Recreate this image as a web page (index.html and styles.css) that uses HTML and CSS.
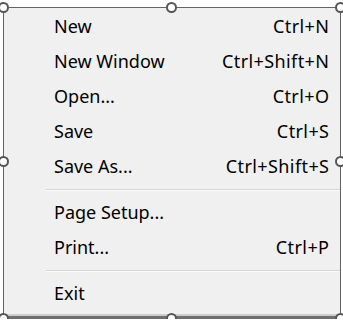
FILE: index.html
```html
<!DOCTYPE html>
<html lang="en">
<head>
    <meta charset="UTF-8">
    <meta name="viewport" content="width=device-width, initial-scale=1.0">
    <title>File Menu</title>
    <link rel="stylesheet" href="styles.css">
</head>
<body>
    <div class="frame">
        <ul class="menu">
            <li class="item"><span class="label">New</span><span class="shortcut">Ctrl+N</span></li>
            <li class="item"><span class="label">New Window</span><span class="shortcut">Ctrl+Shift+N</span></li>
            <li class="item"><span class="label">Open...</span><span class="shortcut">Ctrl+O</span></li>
            <li class="item"><span class="label">Save</span><span class="shortcut">Ctrl+S</span></li>
            <li class="item"><span class="label">Save As...</span><span class="shortcut">Ctrl+Shift+S</span></li>
            <li class="separator"></li>
            <li class="item"><span class="label">Page Setup...</span><span class="shortcut"></span></li>
            <li class="item"><span class="label">Print...</span><span class="shortcut">Ctrl+P</span></li>
            <li class="separator"></li>
            <li class="item"><span class="label">Exit</span><span class="shortcut"></span></li>
        </ul>

        <span class="handle top left"></span>
        <span class="handle top center"></span>
        <span class="handle top right"></span>
        <span class="handle middle left"></span>
        <span class="handle middle right"></span>
        <span class="handle bottom left"></span>
        <span class="handle bottom center"></span>
        <span class="handle bottom right"></span>
    </div>
</body>
</html>
```

FILE: styles.css
```css
body {
    margin: 0;
    background-color: #ffffff;
    font-family: "Noto Sans", "Open Sans", Arial, sans-serif;
    color: #000000;
}

.frame {
    position: relative;
    box-sizing: border-box;
    width: 338px;
    height: 312px;
    margin: 7px 0 0 3px;
    background-color: #f0f0f0;
    border: 1px solid #646464;
    border-bottom: 3px solid #6e6e6e;
    box-shadow: inset 0 -2px 0 #cdcdcd;
}

.menu {
    list-style: none;
    margin: 0;
    padding: 1px 0 0 0;
}

.item {
    display: flex;
    justify-content: space-between;
    height: 35px;
    line-height: 35px;
    padding: 0 11px 0 50px;
    font-size: 18px;
}

.shortcut {
    letter-spacing: 0.4px;
    margin-right: -0.4px;
}

.separator {
    height: 1px;
    margin: 5px 0 4px 42px;
    background-color: #d5d5d5;
    border-bottom: 1px solid #fbfbfb;
}

.handle {
    position: absolute;
    box-sizing: border-box;
    width: 11px;
    height: 11px;
    border: 2px solid #555555;
    border-radius: 50%;
    background-color: #ffffff;
}

.top { top: -6px; }
.middle { top: 148px; }
.bottom { bottom: -8px; }
.left { left: -6px; }
.center { left: 162px; }
.right { right: -6px; }
```
